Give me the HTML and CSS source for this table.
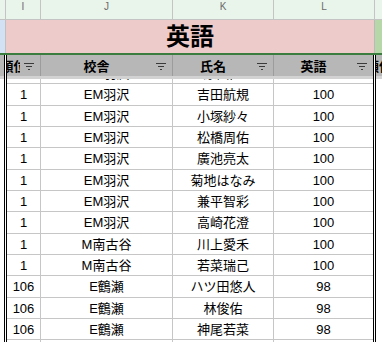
FILE: index.html
```html
<!DOCTYPE html>
<html lang="ja">
<head>
<meta charset="utf-8">
<link rel="stylesheet" href="styles.css">
</head>
<body>
<div class="sheet">
  <div class="colhead">
    <div class="ch"></div>
    <div class="ch">I</div>
    <div class="ch">J</div>
    <div class="ch">K</div>
    <div class="ch">L</div>
    <div class="ch last"></div>
  </div>
  <div class="titlerow">
    <div class="rh"></div>
    <div class="title">英語</div>
    <div class="mfill"></div>
  </div>
  <div class="lower">
    <div class="strip left"><div class="s-head"></div><div class="s-freeze"></div></div>
    <div class="table">
      <div class="thead">
        <div class="th"><span class="lbl"><span>順位</span></span><svg class="flt" viewBox="0 0 10 7"><path d="M0 0.5H10M2 3.5H8M4 6.5H6"/></svg></div>
        <div class="th"><span class="lbl"><span>校舎</span></span><svg class="flt" viewBox="0 0 10 7"><path d="M0 0.5H10M2 3.5H8M4 6.5H6"/></svg></div>
        <div class="th"><span class="lbl"><span>氏名</span></span><svg class="flt" viewBox="0 0 10 7"><path d="M0 0.5H10M2 3.5H8M4 6.5H6"/></svg></div>
        <div class="th"><span class="lbl"><span>英語</span></span><svg class="flt" viewBox="0 0 10 7"><path d="M0 0.5H10M2 3.5H8M4 6.5H6"/></svg></div>
      </div>
      <div class="freeze"></div>
      <div class="scroll">
        <div class="rows">
          <div class="row"><div class="td">1</div><div class="td">EM羽沢</div><div class="td">原田匠</div><div class="td">100</div></div>
          <div class="row"><div class="td">1</div><div class="td">EM羽沢</div><div class="td">吉田航規</div><div class="td">100</div></div>
          <div class="row"><div class="td">1</div><div class="td">EM羽沢</div><div class="td">小塚紗々</div><div class="td">100</div></div>
          <div class="row"><div class="td">1</div><div class="td">EM羽沢</div><div class="td">松橋周佑</div><div class="td">100</div></div>
          <div class="row"><div class="td">1</div><div class="td">EM羽沢</div><div class="td">廣池亮太</div><div class="td">100</div></div>
          <div class="row"><div class="td">1</div><div class="td">EM羽沢</div><div class="td">菊地はなみ</div><div class="td">100</div></div>
          <div class="row"><div class="td">1</div><div class="td">EM羽沢</div><div class="td">兼平智彩</div><div class="td">100</div></div>
          <div class="row"><div class="td">1</div><div class="td">EM羽沢</div><div class="td">高崎花澄</div><div class="td">100</div></div>
          <div class="row"><div class="td">1</div><div class="td">M南古谷</div><div class="td">川上愛禾</div><div class="td">100</div></div>
          <div class="row"><div class="td">1</div><div class="td">M南古谷</div><div class="td">若菜瑞己</div><div class="td">100</div></div>
          <div class="row"><div class="td">106</div><div class="td">E鶴瀬</div><div class="td">ハツ田悠人</div><div class="td">98</div></div>
          <div class="row"><div class="td">106</div><div class="td">E鶴瀬</div><div class="td">林俊佑</div><div class="td">98</div></div>
          <div class="row"><div class="td">106</div><div class="td">E鶴瀬</div><div class="td">神尾若菜</div><div class="td">98</div></div>
          <div class="row"><div class="td">106</div><div class="td">E鶴瀬</div><div class="td">小林美咲</div><div class="td">98</div></div>
        </div>
      </div>
    </div>
    <div class="strip right"><div class="s-head"><span class="lbl mlbl"><span>順位</span></span></div><div class="s-freeze"></div></div>
  </div>
</div>
</body>
</html>
```
FILE: styles.css
```css
* { box-sizing: border-box; }
html, body { margin: 0; padding: 0; }
body {
  width: 382px;
  height: 342px;
  overflow: hidden;
  background: #fff;
  font-family: "Liberation Sans", "Noto Sans CJK JP", sans-serif;
  color: #000;
}
.sheet { width: 382px; }

.colhead {
  display: grid;
  grid-template-columns: 6px 35px 132px 101px 101px 7px;
  height: 20px;
  background: #e9f5eb;
  border-bottom: 1px solid #c4c4c4;
}
.ch {
  border-right: 1px solid #c4c4c4;
  font-size: 10px;
  line-height: 14px;
  color: #6a6a6a;
  text-align: center;
}
.ch.last { border-right: none; }

.titlerow {
  display: grid;
  grid-template-columns: 6px 369px 7px;
  height: 35px;
  border-bottom: 2px solid #3b7d3e;
}
.rh { background: #d3e1f4; border-right: 1px solid #c0c0c0; }
.title {
  background: #eecbcb;
  border-right: 1px solid #b9b9b9;
  display: flex;
  align-items: center;
  justify-content: center;
  font-size: 24px;
  font-weight: bold;
  line-height: 1;
}
.mfill { background: #b6d7a8; }

.lower { display: flex; height: 287px; }
.strip { display: flex; flex-direction: column; }
.strip.left { width: 4px; }
.strip.right { width: 6px; overflow: hidden; }
.s-head { height: 21px; background: #b7b7b7; flex-shrink: 0; }
.s-freeze { height: 3px; background: #d2d2d2; flex-shrink: 0; }
.strip.right .s-head { display: flex; align-items: center; font-size: 13px; font-weight: bold; }
.mlbl { flex: 0 0 14px; width: 14px; }

.table {
  width: 372px;
  border-left: 3px double #000;
  border-right: 3px double #000;
  display: flex;
  flex-direction: column;
}
.thead {
  display: grid;
  grid-template-columns: 34px 132px 101px 99px;
  height: 21px;
  background: #b7b7b7;
  flex-shrink: 0;
}
.th {
  display: flex;
  align-items: center;
  gap: 4px;
  padding-right: 6px;
  border-right: 1px solid #9c9c9c;
  font-size: 13px;
  font-weight: bold;
}
.th:last-child { border-right: none; }
.lbl {
  flex: 1;
  min-width: 0;
  overflow: hidden;
  display: flex;
  justify-content: center;
}
.lbl span { flex-shrink: 0; white-space: nowrap; }
.flt {
  width: 10px;
  height: 7px;
  flex-shrink: 0;
  margin-top: 2px;
  stroke: #3a3a3a;
  stroke-width: 1;
  fill: none;
}

.freeze { height: 3px; background: #d2d2d2; flex-shrink: 0; }
.scroll { flex: 1; overflow: hidden; }
.rows { margin-top: -16px; }
.row {
  display: grid;
  grid-template-columns: 34px 132px 101px 99px;
  height: 21.333px;
  border-bottom: 1px solid #c6c6c6;
}
.td {
  border-right: 1px solid #c6c6c6;
  text-align: center;
  font-size: 13px;
  line-height: 20.333px;
  white-space: nowrap;
  overflow: hidden;
  padding-top: 1px;
}
.td:last-child { border-right: none; }
```
